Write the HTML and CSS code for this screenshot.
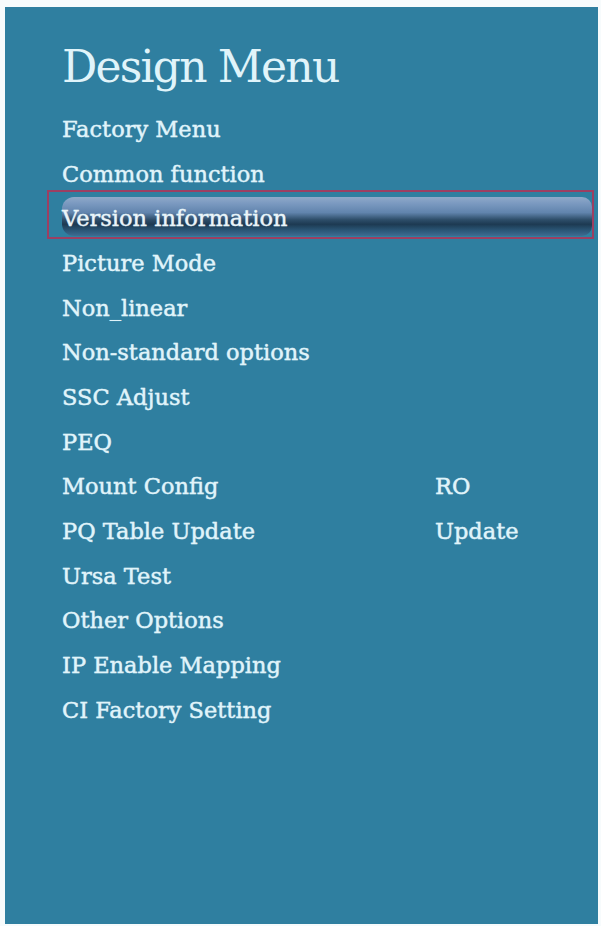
FILE: index.html
```html
<!DOCTYPE html>
<html>
<head>
<meta charset="utf-8">
<link rel="stylesheet" href="styles.css">
</head>
<body>
<div class="panel">
  <h1 class="title">Design Menu</h1>
  <ul class="menu">
    <li class="row"><span class="label">Factory Menu</span></li>
    <li class="row"><span class="label">Common function</span></li>
    <li class="row selected"><span class="label">Version information</span></li>
    <li class="row"><span class="label">Picture Mode</span></li>
    <li class="row"><span class="label">Non_linear</span></li>
    <li class="row"><span class="label">Non-standard options</span></li>
    <li class="row"><span class="label">SSC Adjust</span></li>
    <li class="row"><span class="label">PEQ</span></li>
    <li class="row"><span class="label">Mount Config</span><span class="value">RO</span></li>
    <li class="row"><span class="label">PQ Table Update</span><span class="value">Update</span></li>
    <li class="row"><span class="label">Ursa Test</span></li>
    <li class="row"><span class="label">Other Options</span></li>
    <li class="row"><span class="label">IP Enable Mapping</span></li>
    <li class="row"><span class="label">CI Factory Setting</span></li>
  </ul>
</div>
</body>
</html>
```
FILE: styles.css
```css
html, body {
  margin: 0;
  padding: 0;
  background: #f7fbfc;
}
body {
  width: 601px;
  height: 926px;
  overflow: hidden;
}
.panel {
  margin: 7px 0 0 5px;
  width: 593px;
  height: 917px;
  box-sizing: border-box;
  padding: 36px 0 0 57px;
  background: #2f7fa0;
  font-family: "DejaVu Serif", "Liberation Serif", serif;
  color: #e0f4fa;
}
.title {
  margin: 0 0 16px 0;
  font-size: 44px;
  line-height: 48px;
  font-weight: normal;
  letter-spacing: -1.8px;
}
.menu {
  list-style: none;
  margin: 0;
  padding: 0;
}
.row {
  display: flex;
  height: 44.67px;
  line-height: 44.67px;
  font-size: 22.5px;
  letter-spacing: 0;
  -webkit-text-stroke: 0.3px #e0f4fa;
  text-shadow: 0 0 1px rgba(220, 245, 255, 0.5);
}
.label {
  width: 373px;
  position: relative;
  z-index: 1;
}
.value {
  position: relative;
  z-index: 1;
}
.selected {
  position: relative;
  color: #eef4f8;
}
.selected::before {
  content: "";
  position: absolute;
  left: -15px;
  right: 4px;
  top: -6px;
  bottom: 2px;
  border: 2px solid #9c3f62;
  box-sizing: border-box;
}
.selected::after {
  content: "";
  position: absolute;
  left: 0;
  right: 6px;
  top: 1px;
  bottom: 5px;
  border-radius: 12px 10px 10px 12px;
  background: linear-gradient(to bottom,
    #8fa9c9 0%,
    #7998bf 18%,
    #6184ad 40%,
    #2e4e6a 58%,
    #1d3a52 70%,
    #2a5575 85%,
    #3d6c92 100%);
}
```
